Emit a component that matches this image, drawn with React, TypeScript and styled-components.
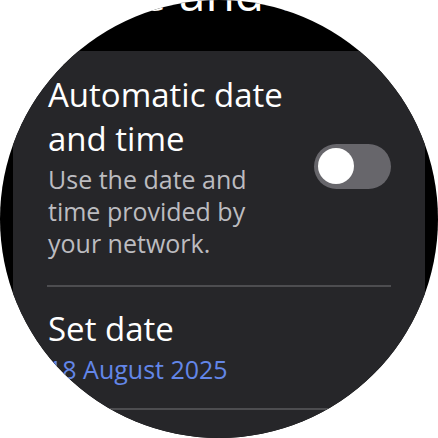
import React from 'react';
import styled, {createGlobalStyle} from "styled-components";

const GlobalStyle = createGlobalStyle`
  html, body {
    margin: 0;
    padding: 0;
    background: #ffffff;
  }
  body {
    font-family: "Open Sans", "Noto Sans", sans-serif;
  }
`;

interface SettingItem {
  id: string;
  title: string;
  summary: string;
  accent?: boolean;
  toggle?: boolean;
}

const items: SettingItem[] = [
  {id: 'auto', title: 'Automatic date and time', summary: 'Use the date and time provided by your network.', toggle: true},
  {id: 'date', title: 'Set date', summary: '18 August 2025', accent: true},
  {id: 'time', title: 'Set time', summary: '10:24', accent: true},
];

const App = () => {
  return (
    <>
      <GlobalStyle/>
      <Screen>
        <Title>Date and time</Title>
        <Card>
          {items.map((item, i) => (
            <React.Fragment key={item.id}>
              {i > 0 && <Divider/>}
              <Row>
                <Texts $narrow={!!item.toggle}>
                  <ItemTitle>{item.title}</ItemTitle>
                  <Summary $accent={item.accent}>{item.summary}</Summary>
                </Texts>
                {item.toggle && (
                  <Track>
                    <Knob/>
                  </Track>
                )}
              </Row>
            </React.Fragment>
          ))}
        </Card>
      </Screen>
    </>
  );
};

const Screen = styled.div`
  width: 438px;
  height: 438px;
  border-radius: 50%;
  background: #000000;
  overflow: hidden;
  display: flex;
  flex-direction: column;
`;

// scrolled: title is partly above the top edge
const Title = styled.h1`
  margin: -39px 0 0;
  height: 90px;
  flex-shrink: 0;
  font-size: 48px;
  line-height: 64px;
  font-weight: 400;
  color: #ffffff;
  text-align: center;
  white-space: nowrap;
`;

const Card = styled.div`
  margin: 0 13px;
  padding: 0 34px;
  background: #262629;
  border-radius: 26px;
  flex-shrink: 0;
`;

const Row = styled.div`
  display: flex;
  align-items: center;
  justify-content: space-between;
  padding: 20px 0 23px;
  &:first-child {
    padding: 22px 0 26px;
  }
`;

const Texts = styled.div<{ $narrow: boolean }>`
  display: flex;
  flex-direction: column;
  gap: 2px;
  width: ${p => p.$narrow ? '240px' : 'auto'};
  padding-left: 1px;
`;

const ItemTitle = styled.div`
  font-size: 33px;
  line-height: 44px;
  color: #ffffff;
`;

const Summary = styled.div<{ $accent?: boolean }>`
  font-size: 25px;
  line-height: 32px;
  color: ${p => p.$accent ? '#6386e8' : '#bcbcc0'};
`;

const Divider = styled.div`
  height: 2px;
  background: #4d4d50;
`;

const Track = styled.div`
  width: 77px;
  height: 45px;
  border-radius: 23px;
  background: #67666b;
  display: flex;
  align-items: center;
  padding-left: 4px;
  box-sizing: border-box;
  flex-shrink: 0;
`;

const Knob = styled.div`
  width: 36px;
  height: 36px;
  border-radius: 50%;
  background: #ffffff;
`;

export default App;
